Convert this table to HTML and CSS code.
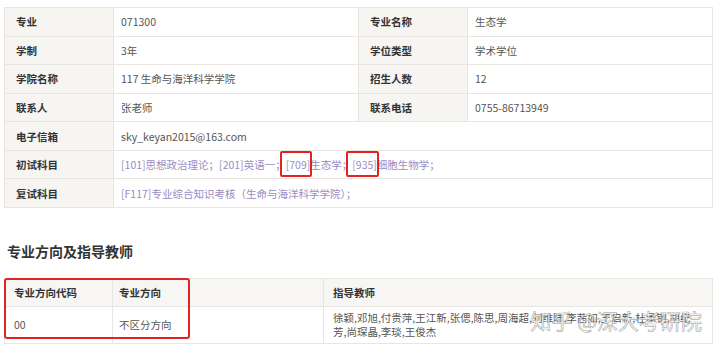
FILE: index.html
```html
<!DOCTYPE html>
<html lang="zh-CN">
<head>
<meta charset="utf-8">
<title>专业信息</title>
<link rel="stylesheet" href="styles.css">
</head>
<body>
<div class="page">
  <table class="info">
    <colgroup>
      <col class="c-label"><col class="c-value"><col class="c-label"><col class="c-value">
    </colgroup>
    <tr><th>专业</th><td>071300</td><th>专业名称</th><td>生态学</td></tr>
    <tr><th>学制</th><td>3年</td><th>学位类型</th><td>学术学位</td></tr>
    <tr><th>学院名称</th><td>117 生命与海洋科学学院</td><th>招生人数</th><td>12</td></tr>
    <tr><th>联系人</th><td>张老师</td><th>联系电话</th><td>0755-86713949</td></tr>
    <tr><th>电子信箱</th><td colspan="3">sky_keyan2015@163.com</td></tr>
    <tr><th>初试科目</th><td colspan="3" class="subjects">[101]思想政治理论；[201]英语一；<span class="mark">[709]</span>生态学；<span class="mark">[935]</span>细胞生物学；</td></tr>
    <tr><th>复试科目</th><td colspan="3" class="subjects">[F117]专业综合知识考核（生命与海洋科学学院）；</td></tr>
  </table>

  <h2 class="section-title">专业方向及指导教师</h2>

  <div class="dir">
    <table class="dir-table">
      <colgroup><col class="d1"><col class="d2"><col class="d3"></colgroup>
      <tr class="head"><th>专业方向代码</th><th>专业方向</th><th>指导教师</th></tr>
      <tr class="body-row"><td>00</td><td>不区分方向</td><td class="teachers">徐颖,邓旭,付贵萍,王江新,张偲,陈思,周海超,刘维陆,李茜如,王启新,杜承钢,胡纪<br>芳,尚琛晶,李琰,王俊杰</td></tr>
    </table>
    <div class="highlight"></div>
    <div class="watermark">知乎 @深大考研院</div>
  </div>
</div>
</body>
</html>
```

FILE: styles.css
```css
* { box-sizing: border-box; }
html, body { margin: 0; background: #fff; }
body {
  font-family: "Noto Sans CJK SC", "Noto Sans", sans-serif;
  font-size: 10.5px;
  color: #555;
}
.page { padding: 7px 8px 0 4px; }

.info {
  width: 708px;
  border-collapse: collapse;
  table-layout: fixed;
  border: 1px solid #e6e3df;
}
.info col.c-label { width: 109px; }
.info col.c-value { width: 245px; }
.info tr { height: 28.57px; }
.info th {
  background: #f7f5f2;
  color: #333;
  font-weight: 700;
  text-align: left;
  padding: 0 0 0 11px;
  border: 1px solid #e9e6e2;
}
.info td {
  padding: 0 0 0 7px;
  border: 1px solid #e9e6e2;
  background: #fff;
}
.info td.subjects {
  color: #9a8cc2;
  font-family: "Noto Sans CJK TC", "Noto Sans CJK SC", sans-serif;
}
.mark { position: relative; }
.mark::before {
  content: "";
  position: absolute;
  left: -6px;
  right: -2px;
  top: -6px;
  bottom: -5px;
  border: 2px solid #e02424;
  border-radius: 2px;
}

.section-title {
  margin: 33px 0 17px 3px;
  font-size: 14px;
  line-height: 20px;
  font-weight: 700;
  color: #333;
}

.dir { position: relative; width: 708px; }
.dir-table {
  width: 708px;
  border-collapse: collapse;
  table-layout: fixed;
  border: 1px solid #e6e3df;
}
.dir-table col.d1 { width: 108px; }
.dir-table col.d2 { width: 211px; }
.dir-table col.d3 { width: 389px; }
.dir-table th {
  background: #f7f6f4;
  color: #333;
  font-weight: 700;
  text-align: left;
  padding: 0 0 0 9px;
  border: 1px solid #e9e6e2;
  border-left: none;
}
.dir-table th + th { border-left: 1px solid #e9e6e2; }
.dir-table th:nth-child(2) { padding-left: 6px; border-left: 1px solid #e9e6e2; }
.dir-table th:nth-child(3) { padding-left: 9px; }
.dir-table td {
  border: 1px solid #e9e6e2;
  padding: 0 0 0 9px;
}
.dir-table td:nth-child(2) { padding-left: 6px; }
.dir-table tr.head { height: 28px; }
.dir-table tr.body-row { height: 37px; }
.teachers { line-height: 14px; }

.highlight {
  position: absolute;
  left: 0;
  top: 0;
  width: 186px;
  height: 61px;
  border: 2px solid #e02424;
  border-radius: 3px;
}
.watermark {
  position: absolute;
  right: 10px;
  top: 31px;
  font-size: 21px;
  line-height: 22px;
  color: rgba(255, 255, 255, 0.85);
  -webkit-text-stroke: 0.7px rgba(110, 110, 110, 0.55);
  white-space: nowrap;
}
```
